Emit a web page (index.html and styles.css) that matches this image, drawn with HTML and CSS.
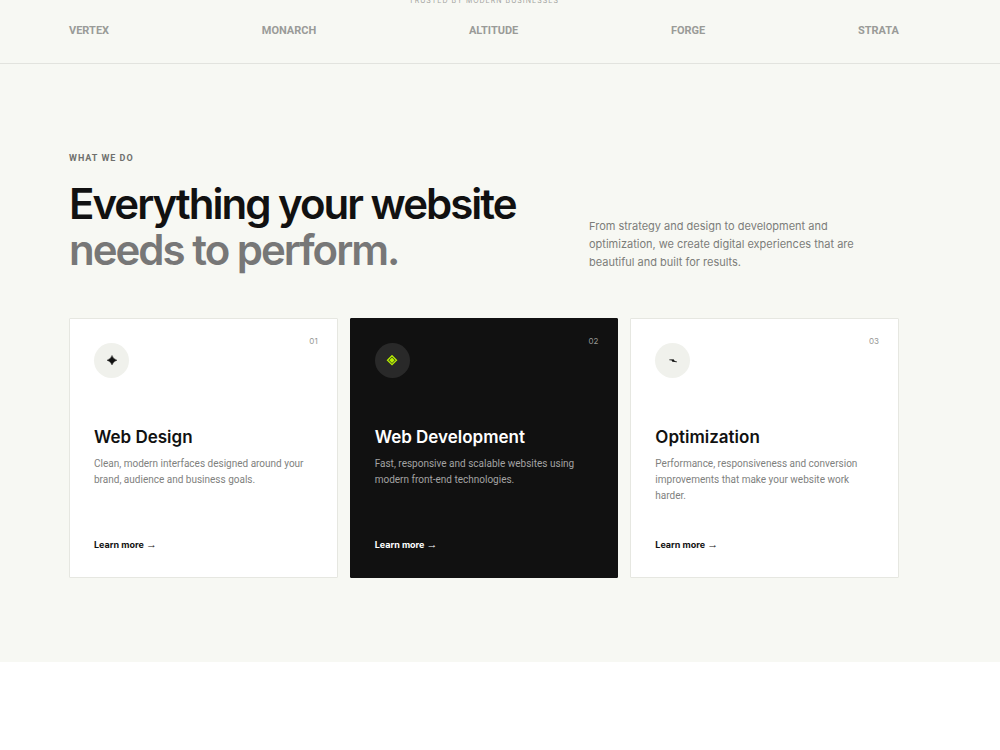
FILE: index.html
```html
<!DOCTYPE html>
<html lang="en">
<head>
    <meta charset="UTF-8">
    <meta name="viewport" content="width=device-width, initial-scale=1.0">
    <title>Services</title>
    <link rel="stylesheet" href="styles.css">
</head>
<body>
    <section class="trusted">
        <p class="trusted-label">Trusted by modern businesses</p>
        <div class="logos">
            <span>VERTEX</span>
            <span>MONARCH</span>
            <span>ALTITUDE</span>
            <span>FORGE</span>
            <span>STRATA</span>
        </div>
    </section>

    <section class="services">
        <p class="eyebrow">What we do</p>
        <div class="services-header">
            <h2>Everything your website <span>needs to perform.</span></h2>
            <p>From strategy and design to development and optimization, we create digital experiences that are beautiful and built for results.</p>
        </div>

        <div class="services-grid">
            <article class="card">
                <div class="card-top">
                    <div class="card-icon">
                        <svg width="12" height="12" viewBox="0 0 12 12" aria-hidden="true">
                            <path d="M6 0.4Q7.2 4 11 5.2Q7.2 6.4 6 10Q4.8 6.4 1 5.2Q4.8 4 6 0.4Z" fill="currentColor" stroke="currentColor" stroke-width="0.4"/>
                        </svg>
                    </div>
                    <span class="card-number">01</span>
                </div>
                <h3>Web Design</h3>
                <p>Clean, modern interfaces designed around your brand, audience and business goals.</p>
                <a href="#">Learn more <span class="arrow">→</span></a>
            </article>

            <article class="card card-dark">
                <div class="card-top">
                    <div class="card-icon">
                        <svg width="12" height="12" viewBox="0 0 12 12" aria-hidden="true">
                            <path d="M6 0.7L10.5 5.2L6 9.7L1.5 5.2Z" fill="none" stroke="currentColor" stroke-width="1.3"/>
                            <path d="M6 2.5L8.7 5.2L6 7.9L3.3 5.2Z" fill="currentColor"/>
                        </svg>
                    </div>
                    <span class="card-number">02</span>
                </div>
                <h3>Web Development</h3>
                <p>Fast, responsive and scalable websites using modern front-end technologies.</p>
                <a href="#">Learn more <span class="arrow">→</span></a>
            </article>

            <article class="card">
                <div class="card-top">
                    <div class="card-icon">
                        <svg width="12" height="12" viewBox="0 0 12 12" aria-hidden="true">
                            <path d="M2.4 4.8L6.6 5L5.4 6.2L9.8 6.8" fill="none" stroke="currentColor" stroke-width="0.9"/>
                            <path d="M4.2 4.8L6.8 4.8L8.2 6.6L5.4 6.2Z" fill="currentColor"/>
                        </svg>
                    </div>
                    <span class="card-number">03</span>
                </div>
                <h3>Optimization</h3>
                <p>Performance, responsiveness and conversion improvements that make your website work harder.</p>
                <a href="#">Learn more <span class="arrow">→</span></a>
            </article>
        </div>
    </section>
</body>
</html>
```

FILE: styles.css
```css
* {
    box-sizing: border-box;
    margin: 0;
    padding: 0;
}
body {
    font-family: "Inter", "Liberation Sans", sans-serif;
    background-color: #ffffff;
    color: #111111;
}
a {
    color: inherit;
    text-decoration: none;
}
.trusted {
    padding: 0 101px 24px 69px;
    background-color: #f7f8f3;
    border-bottom: 1px solid #e2e3de;
}
.trusted-label {
    margin-top: -6px;
    margin-bottom: 16px;
    font-size: 7px;
    line-height: 13px;
    letter-spacing: 1px;
    text-align: center;
    text-transform: uppercase;
    color: #a3a4a0;
}
.logos {
    display: flex;
    justify-content: space-between;
    font-family: "Roboto", sans-serif;
    font-size: 11px;
    font-weight: 700;
    line-height: 16px;
    color: #9a9b98;
}
.services {
    padding: 88px 101px 84px 69px;
    background-color: #f7f8f3;
}
.eyebrow {
    margin-bottom: 17px;
    font-family: "Roboto", sans-serif;
    font-size: 9px;
    font-weight: 700;
    line-height: 12px;
    letter-spacing: 1px;
    text-transform: uppercase;
    color: #6f706d;
}
.services-header {
    display: flex;
    justify-content: space-between;
    align-items: flex-end;
    margin-bottom: 45px;
}
.services-header h2 {
    font-size: 42px;
    font-weight: 600;
    line-height: 46px;
    letter-spacing: -2px;
}
.services-header h2 span {
    display: block;
    color: #777777;
}
.services-header p {
    width: 310px;
    padding-right: 32px;
    padding-bottom: 2px;
    font-size: 11px;
    line-height: 18px;
    color: #7c7d7a;
}
.services-grid {
    display: grid;
    grid-template-columns: repeat(3, 1fr);
    gap: 12px;
}
.card {
    display: flex;
    flex-direction: column;
    min-height: 260px;
    padding: 24px;
    background-color: #ffffff;
    border: 1px solid #e6e7e1;
    border-radius: 1px;
}
.card-top {
    display: flex;
    justify-content: space-between;
    align-items: flex-start;
    margin-bottom: 47px;
}
.card-icon {
    display: flex;
    justify-content: center;
    align-items: center;
    width: 35px;
    height: 35px;
    border-radius: 50%;
    background-color: #f0f1ec;
}
.card-number {
    margin-top: -8px;
    margin-right: -5px;
    font-size: 8px;
    line-height: 12px;
    color: #969794;
}
.card h3 {
    margin-bottom: 7px;
    font-size: 17px;
    font-weight: 600;
    line-height: 24px;
}
.card p {
    font-family: "Roboto", sans-serif;
    font-size: 10px;
    line-height: 16px;
    color: #80817e;
}
.card a {
    margin-top: auto;
    font-size: 9px;
    font-weight: 700;
    line-height: 16px;
}
.arrow {
    font-family: "Liberation Sans", sans-serif;
    font-size: 11px;
    font-weight: 400;
}
.card-dark {
    background-color: #111111;
    border-color: #111111;
    color: #ffffff;
}
.card-dark .card-icon {
    background-color: #292929;
    color: #b8f000;
}
.card-dark p {
    color: #a3a3a3;
}
```
